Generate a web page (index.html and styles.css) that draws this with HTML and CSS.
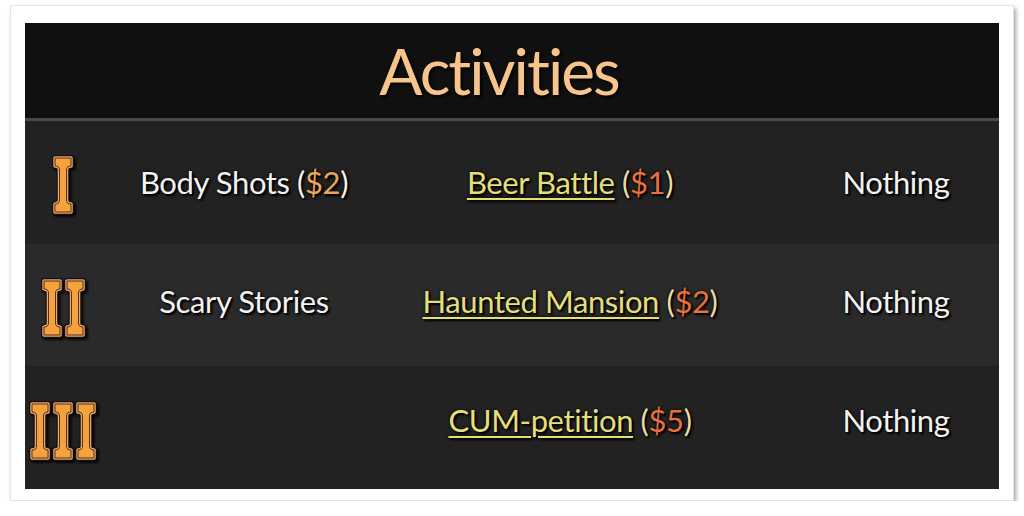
FILE: index.html
```html
<!DOCTYPE html>
<html lang="en">
<head>
    <meta charset="UTF-8">
    <title>Activities</title>
    <link rel="stylesheet" href="styles.css">
</head>
<body>
    <svg class="defs" width="0" height="0" aria-hidden="true">
        <defs>
            <symbol id="roman-i" viewBox="0 0 22 60">
                <path d="M3 3H19V11Q14.5 11 14.5 15V45Q14.5 49 19 49V57H3V49Q7.5 49 7.5 45V15Q7.5 11 3 11Z" fill="none" stroke="#1c0c05" stroke-width="6" stroke-linejoin="round"/>
                <path d="M3 3H19V11Q14.5 11 14.5 15V45Q14.5 49 19 49V57H3V49Q7.5 49 7.5 45V15Q7.5 11 3 11Z" fill="none" stroke="#dcaa7e" stroke-width="3.5" stroke-linejoin="round"/>
                <path d="M3 3H19V11Q14.5 11 14.5 15V45Q14.5 49 19 49V57H3V49Q7.5 49 7.5 45V15Q7.5 11 3 11Z" fill="#f5a23c" stroke="#4a2410" stroke-width="0.9"/>
            </symbol>
        </defs>
    </svg>

    <div class="frame">
        <div class="board">
            <h1 class="board-title">Activities</h1>

            <div class="rows">
                <div class="row">
                    <div class="tier">
                        <svg class="numeral" width="22" height="60"><use href="#roman-i"/></svg>
                    </div>
                    <div class="cell">Body Shots (<span class="cost">$2</span>)</div>
                    <div class="cell"><a class="link" href="#">Beer Battle</a> <span class="paren">(<span class="cost cost-red">$1</span>)</span></div>
                    <div class="cell cell-last">Nothing</div>
                </div>

                <div class="row row-alt">
                    <div class="tier">
                        <svg class="numeral" width="22" height="60"><use href="#roman-i"/></svg>
                        <svg class="numeral" width="22" height="60"><use href="#roman-i"/></svg>
                    </div>
                    <div class="cell">Scary Stories</div>
                    <div class="cell"><a class="link" href="#">Haunted Mansion</a> <span class="paren">(<span class="cost cost-red">$2</span>)</span></div>
                    <div class="cell cell-last">Nothing</div>
                </div>

                <div class="row row-low">
                    <div class="tier">
                        <svg class="numeral" width="22" height="60"><use href="#roman-i"/></svg>
                        <svg class="numeral" width="22" height="60"><use href="#roman-i"/></svg>
                        <svg class="numeral" width="22" height="60"><use href="#roman-i"/></svg>
                    </div>
                    <div class="cell"></div>
                    <div class="cell"><a class="link" href="#">CUM-petition</a> <span class="paren">(<span class="cost cost-red">$5</span>)</span></div>
                    <div class="cell cell-last">Nothing</div>
                </div>
            </div>
        </div>
    </div>
</body>
</html>
```

FILE: styles.css
```css
body {
    margin: 0;
    background: #ffffff;
    font-family: Lato, "Open Sans", sans-serif;
    font-variant-ligatures: none;
}
.defs { position: absolute; }

.frame {
    width: 1004px;
    height: 496px;
    margin: 5px 0 0 10px;
    padding: 17px 14px 12px 14px;
    box-sizing: border-box;
    background: #fff;
    border: 1px solid #e4e4e4;
    box-shadow: 2px 3px 4px rgba(0, 0, 0, 0.35);
}
.board {
    height: 466px;
    display: flex;
    flex-direction: column;
    background: #222;
}
.board-title {
    margin: 0;
    height: 95px;
    padding-right: 26px;
    display: flex;
    align-items: center;
    justify-content: center;
    background: #101010;
    border-bottom: 3px solid #4a4a4a;
    color: #f7c48c;
    font-size: 64px;
    font-weight: normal;
    letter-spacing: -2px;
    text-shadow: 2px 2px 3px #000;
}

.rows { flex: 1; display: flex; flex-direction: column; }
.row {
    flex: 1;
    display: grid;
    grid-template-columns: 76px 286px 366px 248px;
    align-items: center;
    background: #222;
}
.row-alt { background: #2a2a2a; }

.tier {
    display: flex;
    justify-content: center;
    gap: 1px;
    margin-top: 6px;
}
.numeral { filter: drop-shadow(2px 2px 1px rgba(0, 0, 0, 0.8)); }

.cell {
    text-align: center;
    color: #f2f2f2;
    font-size: 31px;
    letter-spacing: -0.4px;
    text-shadow: 2px 2px 2px #000, 0 0 3px #000;
}
.row-alt .cell { margin-bottom: 8px; }
.row-low .cell { margin-bottom: 15px; }
.cell-last { padding-left: 38px; }

.link {
    color: #e4df78;
    text-decoration: underline;
    text-decoration-thickness: 2px;
    text-underline-offset: 4px;
}
.paren { color: #ecdca4; }
.cost { color: #eaa658; }
.cost-red { color: #e8703e; }
```
